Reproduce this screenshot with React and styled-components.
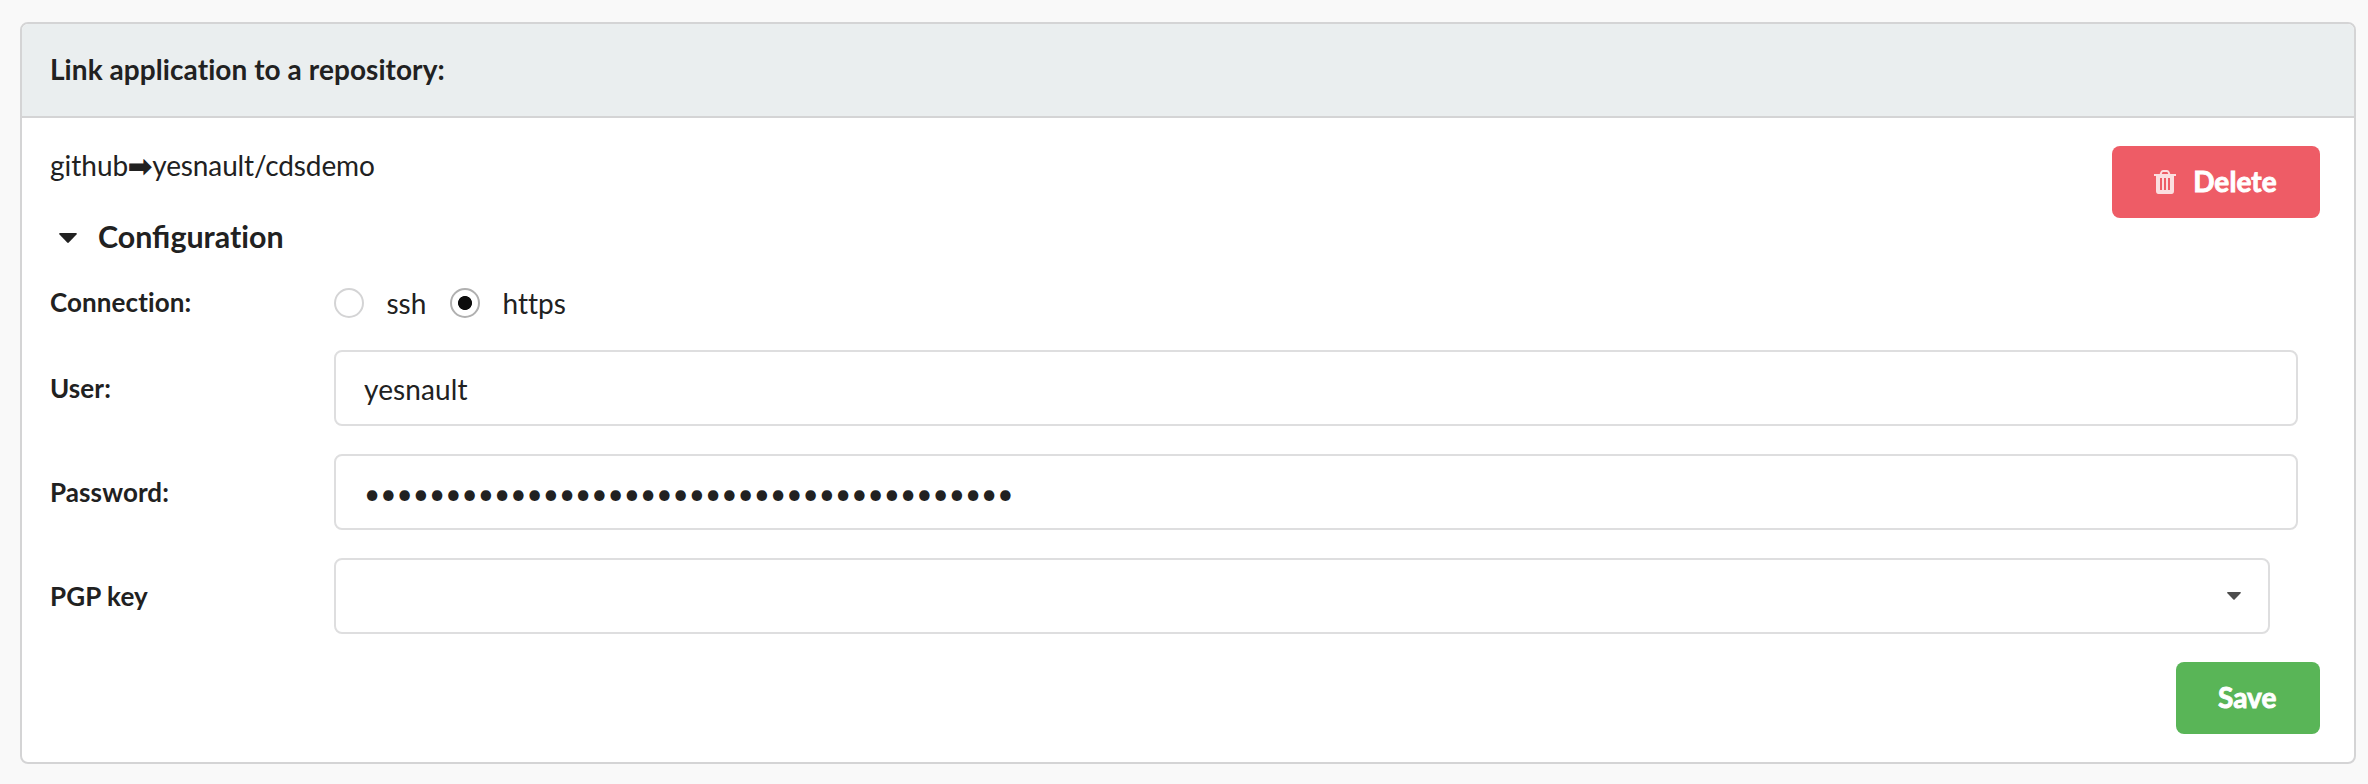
import React, { useState } from "react";
import styled, { createGlobalStyle } from "styled-components";

const Global = createGlobalStyle`
  *, *::before, *::after { box-sizing: border-box; }
  body {
    margin: 0;
    background: #f9f9f9;
    color: #212121;
    font-family: Lato, sans-serif;
    font-size: 28px;
    line-height: 36px;
    font-variant-ligatures: none;
  }
`;

const Page = styled.main`
  min-height: 784px;
  padding: 22px 12px 20px 20px;
`;

const Card = styled.section`
  height: 742px;
  border: 2px solid #d4d4d5;
  border-radius: 8px;
  background: #fff;
  overflow: hidden;
`;

const CardHeader = styled.header`
  height: 94px;
  padding: 27px 28px 0;
  border-bottom: 2px solid #d4d4d5;
  background: #eaeeef;
  font-weight: 700;
  letter-spacing: 0.07px;
`;

const CardBody = styled.div`
  padding: 28px 34px 28px 28px;
`;

const TopRow = styled.div`
  display: flex;
  justify-content: space-between;
  align-items: flex-start;
  height: 72px;
`;

const Repository = styled.div`
  padding-top: 1px;
`;

const RepositoryName = styled.span`
  letter-spacing: -0.13px;
`;

const Arrow = styled.span`
  margin-right: 0.6px;
  font-family: "DejaVu Sans", sans-serif;
  line-height: 1;
  -webkit-text-stroke: 1.2px currentColor;
`;

const Button = styled.button`
  display: flex;
  align-items: center;
  justify-content: center;
  width: ${(p) => p.$width};
  height: 72px;
  padding: 0 1.5px 2px 0;
  border: 0;
  border-radius: 8px;
  background: ${(p) => p.$color};
  color: #fff;
  font: 700 28px/28px Lato, sans-serif;
  font-variant-ligatures: none;
  letter-spacing: 0.1px;
  -webkit-text-stroke: 0.9px #fff;
`;

const TrashIcon = styled.svg`
  width: 22px;
  height: 24px;
  margin: 2px 17.5px 0 0;
  opacity: 0.8;
`;

const AccordionTitle = styled.h4`
  display: flex;
  align-items: center;
  height: 40px;
  margin: 0 0 26px;
  padding-left: 9px;
  gap: 21px;
  font-size: 30.4px;
  font-weight: 700;
`;

const TitleText = styled.span`
  padding-bottom: 4px;
`;

const Ligature = styled.span`
  font-variant-ligatures: common-ligatures;
`;

const Caret = styled.svg`
  display: block;
  width: ${(p) => p.$width};
  height: ${(p) => p.$height};
`;

const Form = styled.form`
  display: flex;
  flex-direction: column;
  gap: 28px;
`;

const Field = styled.div`
  display: grid;
  grid-template-columns: 284px 1fr;
  align-items: center;
  height: ${(p) => p.$height || "76px"};
  padding-right: ${(p) => p.$inset || "22px"};
`;

const Label = styled.label`
  padding-bottom: ${(p) => p.$raise || "0"};
  font-size: 26px;
  font-weight: 700;
  letter-spacing: 0.1px;
`;

const RadioGroup = styled.div`
  display: flex;
  align-items: center;
`;

const RadioOption = styled.label`
  display: flex;
  align-items: center;
  width: 116px;
  gap: 22.5px;
`;

const Radio = styled.input`
  appearance: none;
  flex: none;
  width: 30px;
  height: 30px;
  margin: 0;
  border: 2px solid ${(p) => (p.checked ? "#b0b0b0" : "#d4d4d5")};
  border-radius: 50%;
  background: ${(p) => (p.checked ? "radial-gradient(circle, #0d0d0d 6.6px, #fff 7.4px)" : "#fff")};
`;

const Input = styled.input`
  width: 100%;
  height: 76px;
  padding: 2px 28px 0;
  border: 2px solid #dededf;
  border-radius: 8px;
  background: #fff;
  color: #212121;
  font: 400 28px/34px Lato, sans-serif;
  letter-spacing: ${(p) => (p.type === "password" ? "0" : "0.1px")};
  outline: 0;
`;

const Select = styled.div`
  display: flex;
  align-items: center;
  justify-content: flex-end;
  height: 76px;
  padding-right: 27px;
  border: 2px solid #dededf;
  border-radius: 8px;
  color: #4d4d4d;
`;

const Actions = styled.div`
  display: flex;
  justify-content: flex-end;
`;

function Triangle({ width, height }) {
  return (
    <Caret $width={width} $height={height} viewBox="0 0 18 10" fill="currentColor">
      <path d="M1 0H17Q18.4.4 17.5 1.5L9.8 9.5Q9 10.3 8.2 9.5L.5 1.5Q-.4.4 1 0Z" />
    </Caret>
  );
}

export default function App() {
  const [protocol, setProtocol] = useState("https");
  return (
    <>
      <Global />
      <Page>
        <Card>
          <CardHeader>Link application to a repository:</CardHeader>
          <CardBody>
            <TopRow>
              <Repository>
                github<Arrow>➡</Arrow>
                <RepositoryName>yesnault/cdsdemo</RepositoryName>
              </Repository>
              <Button type="button" $width="208px" $color="#ee5c66">
                <TrashIcon viewBox="0 0 22 24" fill="none" stroke="#fff">
                  <path d="M6.5 4.5L7.5 2Q7.9 1 9 1H13Q14.1 1 14.5 2L15.5 4.5" strokeWidth="2" />
                  <path
                    fill="#fff"
                    fillRule="evenodd"
                    stroke="none"
                    d="M0 4H22V6H20V21Q20 24 17.5 24H4.5Q2 24 2 21V6H0ZM6 8V20H8V8ZM10 8V20H12V8ZM14 8V20H16V8Z"
                  />
                </TrashIcon>
                Delete
              </Button>
            </TopRow>
            <AccordionTitle>
              <Triangle width="18px" height="10px" />
              <TitleText>
                <Ligature>Confi</Ligature>guration
              </TitleText>
            </AccordionTitle>
            <Form>
              <Field $height="38px">
                <Label $raise="2px">Connection:</Label>
                <RadioGroup>
                  {["ssh", "https"].map((name) => (
                    <RadioOption key={name}>
                      <Radio
                        type="radio"
                        name="protocol"
                        checked={protocol === name}
                        onChange={() => setProtocol(name)}
                      />
                      {name}
                    </RadioOption>
                  ))}
                </RadioGroup>
              </Field>
              <Field>
                <Label htmlFor="user">User:</Label>
                <Input id="user" type="text" defaultValue="yesnault" />
              </Field>
              <Field>
                <Label htmlFor="password">Password:</Label>
                <Input id="password" type="password" defaultValue={"x".repeat(40)} />
              </Field>
              <Field $inset="50px">
                <Label>PGP key</Label>
                <Select>
                  <Triangle width="14px" height="8px" />
                </Select>
              </Field>
              <Actions>
                <Button type="button" $width="144px" $color="#59b557">
                  Save
                </Button>
              </Actions>
            </Form>
          </CardBody>
        </Card>
      </Page>
    </>
  );
}
